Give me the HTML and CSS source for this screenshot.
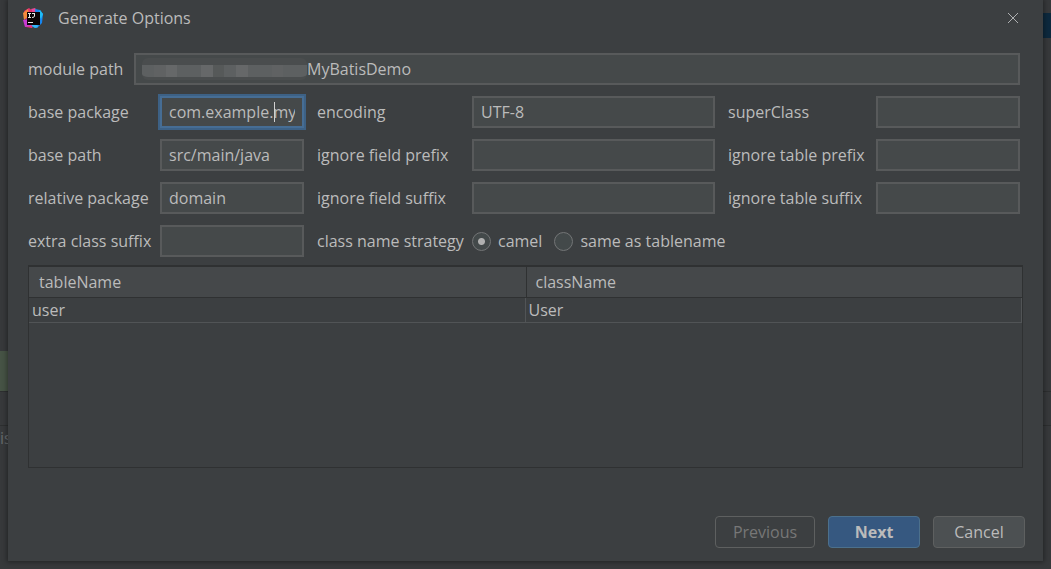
FILE: index.html
```html
<!DOCTYPE html>
<html lang="en">
<head>
<meta charset="utf-8">
<title>Generate Options</title>
<link rel="stylesheet" href="styles.css">
</head>
<body>
<div class="editor" aria-hidden="true">
  <div class="editor-tab"></div>
  <div class="editor-band"></div>
  <div class="editor-panel">is</div>
</div>
<main class="dialog">
  <header class="titlebar">
    <svg class="logo" viewBox="0 0 20 20" aria-hidden="true">
      <path d="M1 3L6 0l6 5v10l-3 5-6-1 1-6z" fill="#e8336f"/>
      <path d="M0 5l5-4 1 7-5 4z" fill="#f58a3c"/>
      <path d="M0 12l5-1 3 7-6 1z" fill="#c83ad0"/>
      <path d="M8 1l4-1 3 4-4 3z" fill="#e64a9a"/>
      <path d="M12 1l5 1 3 4-1 9-5 5-5-1 4-4z" fill="#1687f2"/>
      <path d="M17 2l3 4-2 5-3-5z" fill="#20bdf5"/>
      <path d="M8 17l6-2 1 4-3 1z" fill="#36b7f8"/>
      <path d="M4 4h13v13H4z" fill="#0b0306"/>
      <path d="M5 5.500h3M6.500 5.500v4M5 9.500h3M9 5.500h3M11.500 5.500v2.500q0 1.500-2.500 1.500M5 14.500h5" fill="none" stroke="#e8e8e8" stroke-width="1"/>
    </svg>
    <h1 class="title">Generate Options</h1>
    <button class="close" aria-label="Close">
      <svg viewBox="0 0 10 10" class="close-icon"><path d="M0 0L10 10M10 0L0 10"/></svg>
    </button>
  </header>
  <form class="form">
    <div class="path-row">
      <label for="module">module path</label>
      <div class="holder">
        <input class="field module" id="module" value="MyBatisDemo">
        <div class="mosaic"><i></i><i></i><i></i><i></i><i></i><i></i><i></i><i></i><i></i><i></i><i></i><i></i><i></i><i></i></div>
      </div>
    </div>
    <div class="grid">
      <label for="pkg">base package</label>
      <div class="holder">
        <input class="field focused" id="pkg" value="com.example.mybatis">
        <span class="caret"></span>
      </div>
      <label for="enc">encoding</label><input class="field" id="enc" value="UTF-8">
      <label for="super">superClass</label><input class="field" id="super">

      <label for="base">base path</label><input class="field" id="base" value="src/main/java">
      <label for="fprefix">ignore field prefix</label><input class="field" id="fprefix">
      <label for="tprefix">ignore table prefix</label><input class="field" id="tprefix">

      <label for="rel">relative package</label><input class="field" id="rel" value="domain">
      <label for="fsuffix">ignore field suffix</label><input class="field" id="fsuffix">
      <label for="tsuffix">ignore table suffix</label><input class="field" id="tsuffix">

      <label for="extra">extra class suffix</label><input class="field" id="extra">
      <span class="group-label" id="strategy">class name strategy</span>
      <div class="radios" role="radiogroup" aria-labelledby="strategy">
        <label class="choice"><input type="radio" name="strategy" checked>camel</label>
        <label class="choice"><input type="radio" name="strategy">same as tablename</label>
      </div>
    </div>
  </form>
  <div class="table-box">
    <table class="table">
      <thead><tr><th>tableName</th><th>className</th></tr></thead>
      <tbody><tr><td>user</td><td>User</td></tr></tbody>
    </table>
  </div>
  <footer class="actions">
    <button class="btn previous" disabled>Previous</button>
    <button class="btn next">Next</button>
    <button class="btn cancel">Cancel</button>
  </footer>
</main>
</body>
</html>
```
FILE: styles.css
```css
* { box-sizing: border-box; }
body {
  margin: 0;
  min-height: 100vh;
  display: flex;
  padding: 0 8px 8px;
  background: #37393b;
  color: #bbbbbb;
  font: 16px/24px "Open Sans", "Noto Sans", sans-serif;
}
.editor { position: absolute; inset: 0; overflow: hidden; }
.editor-tab { position: absolute; top: 13px; right: 0; width: 16px; height: 25px; background: #0d293e; }
.editor-band { position: absolute; top: 351px; left: 0; width: 16px; height: 40px; background: #465345; }
.editor-panel {
  position: absolute; top: 391px; left: 0; right: 0; height: 35px;
  border: solid #2d2f30; border-width: 1px 0;
  color: #66696b; line-height: 92px;
}
.dialog {
  position: relative;
  flex: 1;
  display: flex;
  flex-direction: column;
  background: #3c3f41;
  box-shadow: 0 0 5px 1px rgba(0, 0, 0, 0.4);
}
.titlebar { display: flex; align-items: center; height: 35px; padding: 0 25px 0 15px; }
.logo { width: 20px; height: 20px; }
.title { flex: 1; margin: 0 0 0 15px; font-size: 16px; font-weight: 400; }
.close { display: flex; padding: 0; border: 0; background: none; }
.close-icon { width: 10px; height: 10px; fill: none; stroke: #aeb0b1; stroke-width: 1; overflow: visible; }
.form { display: flex; flex-direction: column; gap: 11px; padding: 18px 23px 0 20px; }
.path-row { display: grid; grid-template-columns: 106px 1fr; align-items: center; }
.grid {
  display: grid;
  grid-template-columns: 132px 144fr 168px 243fr 161px 144fr;
  row-gap: 11px;
  align-items: center;
}
.grid > label:nth-of-type(3n + 2), .grid > label:nth-of-type(3n), .group-label { padding-left: 13px; }
label, .group-label { white-space: nowrap; }
.holder { position: relative; }
.field {
  display: block;
  width: 100%;
  min-width: 0;
  height: 32px;
  padding: 0 7px;
  border: 2px solid #585a5b;
  border-radius: 0;
  outline: 0;
  background: #45494a;
  color: #bbbbbb;
  font: inherit;
}
.module { padding-left: 171px; }
.focused { border-color: #466d94; box-shadow: 0 0 0 2px #3d6185; }
.caret { position: absolute; left: 114px; top: 6px; width: 1px; height: 20px; background: #d0d0d0; }
.mosaic {
  position: absolute; left: 8px; top: 5px; width: 165px; height: 22px;
  display: flex; border-radius: 6px; overflow: hidden;
  border: solid #4a4d4e; border-width: 7px 0 3px;
}
.mosaic i { flex: 1; background: #5d6061; }
.mosaic i:nth-child(3n) { background: #666869; }
.mosaic i:nth-child(5n + 2) { background: #606263; }
.mosaic i:nth-child(7) { background: #565959; }
.radios { grid-column: 4 / 7; display: flex; gap: 12px; }
.choice { display: flex; align-items: center; gap: 7px; }
.choice input {
  appearance: none;
  width: 19px;
  height: 19px;
  margin: 0;
  border: 1px solid #737576;
  border-radius: 50%;
  background: #43494a;
}
.choice input:checked { background: radial-gradient(circle, #b0b0b0 3px, #43494a 4px); }
.table-box {
  flex: 1;
  min-height: 203px;
  margin: 8px 20px 0;
  border: 1px solid #2f3132;
  border-top-width: 2px;
}
.table { width: 100%; table-layout: fixed; border-collapse: separate; border-spacing: 0; }
.table th {
  height: 31px;
  padding: 0 10px;
  background: #45484a;
  border-bottom: 1px solid #2f3132;
  font-weight: 400;
  text-align: left;
}
.table th + th { border-left: 1px solid #2f3132; padding-left: 9px; }
.table td { height: 25px; padding: 0 3px; border: solid #515456; border-width: 0 1px 1px 0; }
.actions { display: flex; justify-content: flex-end; gap: 13px; padding: 48px 18px 13px; }
.btn {
  width: 92px;
  height: 32px;
  padding: 0;
  border: 1px solid #5e6060;
  border-radius: 4px;
  background: #4c5052;
  color: #bbbbbb;
  font: inherit;
}
.previous { width: 100px; background: transparent; color: #777777; }
.next { background: #365880; border-color: #4c708c; font-weight: 700; }
```
